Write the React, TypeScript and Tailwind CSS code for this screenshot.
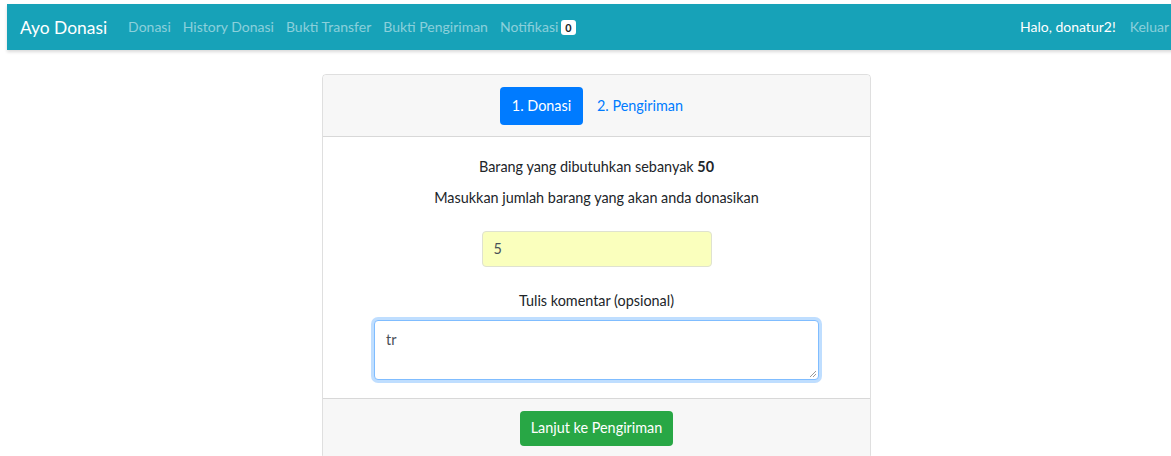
import React from "react";

const font = { fontFamily: "Lato, 'Noto Sans', sans-serif" };

function NavLink({ children }: { children: React.ReactNode }) {
  return <a className="text-[14px] text-white/50 leading-[21.6px] px-[6px] whitespace-nowrap">{children}</a>;
}

export default function App() {
  return (
    <div className="w-[1171px] h-[456px] overflow-hidden bg-white" style={font}>
      <div className="w-[1186px] pl-[7px] pt-[4px]">
        <nav className="h-[46px] bg-[#17a2b8] flex items-center pl-[13px] shadow-[0_2px_3px_rgba(0,0,0,0.15)]">
          <span className="text-[17.4px] text-white mr-[15px] leading-[27px]">Ayo Donasi</span>
          <div className="flex items-center">
            <NavLink>Donasi</NavLink>
            <NavLink>History Donasi</NavLink>
            <NavLink>Bukti Transfer</NavLink>
            <NavLink>Bukti Pengiriman</NavLink>
            <a className="text-[14px] text-white/50 leading-[21.6px] pl-[6px] flex items-center">
              Notifikasi
              <span className="ml-[3px] bg-white text-[#212529] text-[10.8px] font-bold rounded-[3px] px-[4px] leading-[15px]">0</span>
            </a>
          </div>
          <div className="ml-auto flex items-center pr-[11px]">
            <span className="text-[14px] text-white leading-[21.6px] mr-[8px]">Halo, donatur2!</span>
            <NavLink>Keluar</NavLink>
          </div>
        </nav>

        <div className="mt-[24px] mx-auto w-[549px] border border-black/[0.125] rounded-[4px] text-[#212529] text-[14.4px]">
          <div className="h-[62px] bg-[#f7f7f7] border-b border-black/[0.125] flex items-center justify-center rounded-t-[4px]">
            <span className="h-[38px] w-[83px] bg-[#007bff] text-white rounded-[4px] flex items-center justify-center">1. Donasi</span>
            <span className="h-[38px] pl-[14px] pr-[10px] text-[#007bff] flex items-center">2. Pengiriman</span>
          </div>
          <div className="pt-[18px] pb-[18px] px-[51px] flex flex-col items-center">
            <p className="leading-[21.6px] mt-[1px]">Barang yang dibutuhkan sebanyak <b>50</b></p>
            <p className="leading-[21.6px] mt-[9px]">Masukkan jumlah barang yang akan anda donasikan</p>
            <div className="mt-[23px] w-[230px] h-[36px] bg-[#faffbd] border border-[#dfe2d0] rounded-[4px] flex items-center px-[11px] text-[#495057]">5</div>
            <p className="leading-[21.6px] mt-[23px]">Tulis komentar (opsional)</p>
            <div className="relative mt-[8px] w-full h-[60px] bg-white border border-[#80bdff] rounded-[4px] shadow-[0_0_0_3px_rgba(0,123,255,0.25)] px-[11px] pt-[8px] text-[#495057]">
              tr
              <svg className="absolute right-[1px] bottom-[1px]" width="9" height="9" viewBox="0 0 9 9">
                <line x1="8" y1="2" x2="2" y2="8" stroke="#999" strokeWidth="1" />
                <line x1="8" y1="5" x2="5" y2="8" stroke="#999" strokeWidth="1" />
              </svg>
            </div>
          </div>
          <div className="bg-[#f7f7f7] border-t border-black/[0.125] pt-[12px] pb-[12px] flex justify-center">
            <span className="h-[35px] px-[11px] bg-[#28a745] text-white rounded-[4px] flex items-center whitespace-nowrap">Lanjut ke Pengiriman</span>
          </div>
        </div>
      </div>
    </div>
  );
}
